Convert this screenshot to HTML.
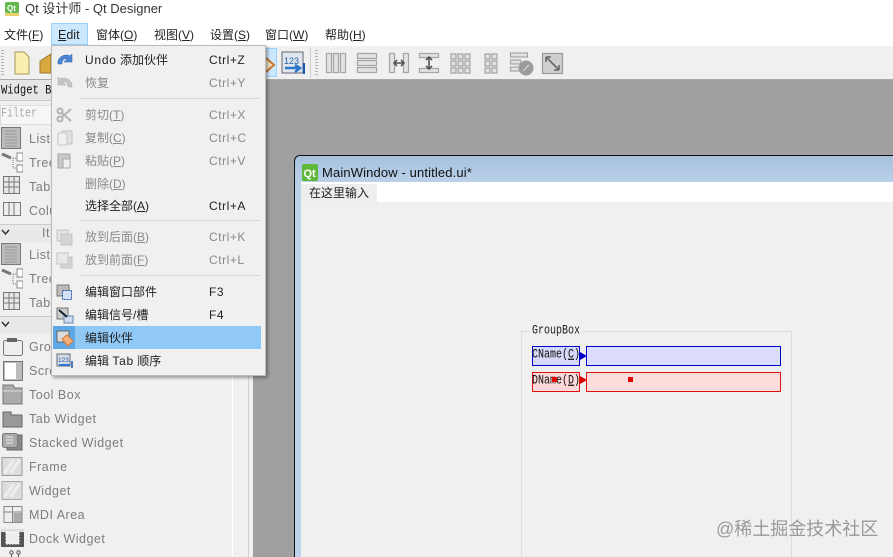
<!DOCTYPE html>
<html><head><meta charset="utf-8"><style>
html,body{margin:0;padding:0;width:893px;height:557px;overflow:hidden}
body{font-family:"Liberation Sans","Noto Sans CJK SC",sans-serif;font-size:12px;color:#111}
#r{position:absolute;left:0;top:0;width:893px;height:557px;overflow:hidden;background:#f0f0f0}
#r div,#r svg{position:absolute;white-space:nowrap}
u{text-decoration:underline}
em{font-style:normal;letter-spacing:.75px}
.m{top:27px;font-size:12px;line-height:16px;color:#222}
.it{left:85px;font-size:12px;line-height:16px;color:#222}
.sc{left:209px;font-size:12px;line-height:16px;color:#222;letter-spacing:.55px}
.d{color:#8a8a8a}
.sep{left:80px;width:180px;height:1px;background:#d6d6d6}
.w{left:29px;font-size:12.5px;line-height:16px;color:#7d7d7d;letter-spacing:.5px}
.i{left:1px;width:20px;height:20px}
.mono{font-family:"Liberation Mono","Noto Sans CJK SC",monospace}
.t{transform:scaleY(1.25);transform-origin:left center}
</style></head><body><div id="r">
<div style="left:0;top:0;width:893px;height:46px;background:#fff"></div>
<svg style="left:5px;top:2px" width="14" height="14"><rect width="14" height="11" y="0" rx="2" fill="#63b84f"/><rect y="11" width="14" height="3" fill="#e8d36a"/><text x="2" y="9" font-size="8" font-weight="bold" fill="#fff" font-family="Liberation Sans">Qt</text></svg>
<div style="left:25px;top:0;font-size:13px;line-height:17px;color:#333">Qt 设计师 - Qt Designer</div>
<div style="left:51px;top:23px;width:37px;height:22px;background:#cce8ff;border:1px solid #99d1ff;box-sizing:border-box"></div>
<div class="m" style="left:4px">文件(<u>F</u>)</div>
<div class="m" style="left:58px;font-size:12.5px"><u>E</u>dit</div>
<div class="m" style="left:96px">窗体(<u>O</u>)</div>
<div class="m" style="left:154px">视图(<u>V</u>)</div>
<div class="m" style="left:210px">设置(<u>S</u>)</div>
<div class="m" style="left:265px">窗口(<u>W</u>)</div>
<div class="m" style="left:325px">帮助(<u>H</u>)</div>

<!-- toolbar -->
<div style="left:0;top:46px;width:893px;height:34px;background:#f0f0f0;border-bottom:1px solid #a8a8a8;box-sizing:border-box"></div>
<div style="left:1px;top:50px;width:3px;height:27px;background:repeating-linear-gradient(#b5b5b5 0 1px,transparent 1px 3px)"></div>
<svg style="left:14px;top:51px" width="16" height="25"><path d="M1 1H10L15 6V23H1Z" fill="#fbefb0" stroke="#a89a60"/></svg>
<svg style="left:39px;top:53px" width="12" height="22"><path d="M1 8L12 1V20H1Z" fill="#d9a93f" stroke="#9b7a2c"/></svg>
<div style="left:265px;top:48px;width:12px;height:29px;background:#cce8ff;border:1px solid #99d1ff;box-sizing:border-box"></div>
<svg style="left:265px;top:55px" width="12" height="20"><path d="M1 3L9 10L1 17" fill="#f3e3c8" stroke="#c9772c" stroke-width="2"/></svg>
<svg style="left:281px;top:51px" width="25" height="25"><rect x="1" y="1" width="21" height="21" fill="#dfe6ee" stroke="#667"/><text x="3" y="13" font-size="9" fill="#2a5ea8" font-family="Liberation Sans">123</text><path d="M4 17H18M14 14L19 17L14 21" stroke="#2f78c8" stroke-width="2.5" fill="none"/><path d="M23 12V23" stroke="#1a55a8" stroke-width="2"/></svg>
<div style="left:310px;top:48px;width:1px;height:30px;background:#cfcfcf"></div>
<div style="left:315px;top:50px;width:3px;height:27px;background:repeating-linear-gradient(#b5b5b5 0 1px,transparent 1px 3px)"></div>
<svg style="left:325px;top:50px" width="245" height="26" fill="#e2e2e2" stroke="#a4a4a4" stroke-width="1.200">
<rect x="1.500" y="3.500" width="5" height="19"/><rect x="8.500" y="3.500" width="5" height="19"/><rect x="15.500" y="3.500" width="5" height="19"/>
<rect x="32.500" y="3.500" width="19" height="5"/><rect x="32.500" y="10.500" width="19" height="5"/><rect x="32.500" y="17.500" width="19" height="5"/>
<rect x="64.500" y="3.500" width="5" height="19"/><rect x="78.500" y="3.500" width="5" height="19"/><path d="M70 13H78M72 10L69 13L72 16M76 10L79 13L76 16" stroke="#555" stroke-width="1.600" fill="none"/>
<rect x="94.500" y="3.500" width="19" height="4"/><rect x="94.500" y="18.500" width="19" height="4"/><path d="M104 8V18M101 10L104 7L107 10M101 16L104 19L107 16" stroke="#555" stroke-width="1.600" fill="none"/>
<path d="M126 4h5v5h-5zM133 4h5v5h-5zM140 4h5v5h-5zM126 11h5v5h-5zM133 11h5v5h-5zM140 11h5v5h-5zM126 18h5v5h-5zM133 18h5v5h-5zM140 18h5v5h-5z"/>
<path d="M160 4h5v5h-5zM167 4h5v5h-5zM160 11h5v5h-5zM167 11h5v5h-5zM160 18h5v5h-5zM167 18h5v5h-5z"/>
<rect x="185.500" y="3" width="17" height="4"/><rect x="185.500" y="10" width="10" height="4"/><rect x="185.500" y="17" width="10" height="4"/><circle cx="201" cy="18" r="7" fill="#9a9a9a"/><path d="M198 21L204 15" stroke="#ddd"/>
<rect x="217.500" y="3.500" width="20" height="20" fill="#cfcfcf" stroke="#999"/><path d="M221 7L234 20M221 7h5M221 7v5M234 20h-5M234 20v-5" stroke="#666" stroke-width="1.600"/>
</svg>

<!-- mdi -->
<div style="left:253px;top:80px;width:640px;height:477px;background:#a0a0a0"></div>
<div style="left:232px;top:80px;width:1px;height:477px;background:#fff"></div>
<div style="left:248px;top:80px;width:1px;height:477px;background:#d0d0d0"></div>

<!-- widget box -->
<div style="left:0;top:80px;width:232px;height:21px;background:#e6e6e6;border-bottom:1px solid #c8c8c8;box-sizing:border-box"></div>
<div class="mono t" style="left:1px;top:84px;font-size:10.500px;line-height:14px;color:#111">Widget B</div>
<div style="left:0;top:105px;width:232px;height:20px;background:#f6f6f6;border:1px solid #ddd;box-sizing:border-box"></div>
<div class="mono t" style="left:1px;top:108px;font-size:10px;line-height:13px;color:#aaa">Filter</div>

<svg class="i" style="top:127px;height:22px" viewBox="0 0 20 22"><rect x=".5" y=".5" width="19" height="21" fill="#bbb" stroke="#777"/><path d="M4 4H16M4 7H16M4 10H16M4 13H16M4 16H16M4 19H16" stroke="#999"/></svg>
<div class="w" style="top:131px">List</div>
<svg class="i" style="top:152px;height:21px;width:22px" viewBox="0 0 22 21"><path d="M1 2L10 6" stroke="#777" stroke-width="3"/><rect x="16" y="1" width="6" height="8" fill="#fff" stroke="#888"/><rect x="16" y="13" width="6" height="7" fill="#fff" stroke="#888"/><path d="M12 6V16M12 6H15M12 16H15" stroke="#777" stroke-dasharray="1 1" fill="none"/></svg>
<div class="w" style="top:155px">Tree</div>
<svg class="i" style="top:175px" viewBox="0 0 20 20" fill="none" stroke="#777"><rect x="2.500" y="1.500" width="16" height="17" fill="#e8e8e8"/><path d="M2 7H18M2 12H18M8 2V18M13 2V18"/></svg>
<div class="w" style="top:179px">Tab</div>
<svg class="i" style="top:200px" viewBox="0 0 20 20" fill="none" stroke="#777"><rect x="2.500" y="2.500" width="17" height="13" fill="#eee"/><path d="M8 3V15M13 3V15"/></svg>
<div class="w" style="top:203px">Colu</div>
<div style="left:0;top:224px;width:232px;height:18px;background:#e9e9e9;border-top:1px solid #ccc;box-sizing:border-box"></div>
<svg style="left:1px;top:228px" width="10" height="8"><path d="M1 2L4.500 6L8 2" fill="none" stroke="#333" stroke-width="1.500"/></svg>
<div class="w" style="left:42px;top:225px">It</div>
<svg class="i" style="top:243px;height:22px" viewBox="0 0 20 22"><rect x=".5" y=".5" width="19" height="21" fill="#bcbcbc" stroke="#777"/><path d="M4 4H16M4 7H16M4 10H16M4 13H16M4 16H16M4 19H16" stroke="#999"/></svg>
<div class="w" style="top:247px">List</div>
<svg class="i" style="top:268px;height:21px;width:22px" viewBox="0 0 22 21"><path d="M1 2L10 6" stroke="#777" stroke-width="3"/><rect x="16" y="1" width="6" height="8" fill="#fff" stroke="#888"/><rect x="16" y="13" width="6" height="7" fill="#fff" stroke="#888"/><path d="M12 6V16M12 6H15M12 16H15" stroke="#777" stroke-dasharray="1 1" fill="none"/></svg>
<div class="w" style="top:271px">Tree</div>
<svg class="i" style="top:291px" viewBox="0 0 20 20" fill="none" stroke="#777"><rect x="2.500" y="1.500" width="16" height="17" fill="#e8e8e8"/><path d="M2 7H18M2 12H18M8 2V18M13 2V18"/></svg>
<div class="w" style="top:295px">Tab</div>
<div style="left:0;top:316px;width:232px;height:18px;background:#e9e9e9;border-top:1px solid #ccc;box-sizing:border-box"></div>
<svg style="left:1px;top:320px" width="10" height="8"><path d="M1 2L4.500 6L8 2" fill="none" stroke="#333" stroke-width="1.500"/></svg>
<svg class="i" style="top:336px;height:21px;width:22px" viewBox="0 0 22 21"><rect x="2.500" y="4.500" width="19" height="15" rx="2" fill="#eee" stroke="#777"/><rect x="6" y="2" width="10" height="4" fill="#666"/></svg>
<div class="w" style="top:339px">Gro</div>
<svg class="i" style="top:360px;height:21px;width:22px" viewBox="0 0 22 21"><rect x="2.500" y="1.500" width="19" height="19" fill="#bbb" stroke="#777"/><rect x="4" y="3" width="11" height="16" fill="#fff"/></svg>
<div class="w" style="top:363px">Scro</div>
<svg class="i" style="top:383px;height:22px;width:22px" viewBox="0 0 22 22"><path d="M2 2H12L14 5H21V21H2Z" fill="#aaa" stroke="#777"/><path d="M2 8H21" stroke="#ddd"/></svg>
<div class="w" style="top:387px">Tool Box</div>
<svg class="i" style="top:411px;height:17px;width:22px" viewBox="0 0 22 17"><path d="M2 1H10V4H21V16H2Z" fill="#999" stroke="#666"/></svg>
<div class="w" style="top:411px">Tab Widget</div>
<svg class="i" style="top:432px;height:20px;width:22px" viewBox="0 0 22 20"><rect x="6" y="3" width="15" height="15" fill="#888" stroke="#666"/><rect x="1.500" y="1.500" width="15" height="14" rx="2" fill="#aaa" stroke="#777"/><path d="M5 5H12M5 8H12M5 11H12" stroke="#eee"/></svg>
<div class="w" style="top:435px">Stacked Widget</div>
<svg class="i" style="top:457px;width:22px" viewBox="0 0 21 20"><rect x=".5" y=".5" width="20" height="18" fill="#ddd" stroke="#999"/><path d="M3 16L12 3M9 16L18 3" stroke="#eee" stroke-width="3"/></svg>
<div class="w" style="top:459px">Frame</div>
<svg class="i" style="top:481px;width:22px" viewBox="0 0 21 20"><rect x=".5" y=".5" width="20" height="18" fill="#ddd" stroke="#aaa"/><path d="M3 16L12 3M9 16L18 3" stroke="#eee" stroke-width="3"/></svg>
<div class="w" style="top:483px">Widget</div>
<svg class="i" style="top:505px;width:22px" viewBox="0 0 21 20"><rect x="2.500" y="1.500" width="18" height="16" fill="#eee" stroke="#888"/><rect x="12" y="8" width="8" height="9" fill="#aaa"/><path d="M3 7H20M11 2V17" stroke="#888"/></svg>
<div class="w" style="top:507px">MDI Area</div>
<svg class="i" style="top:529px;height:18px;width:23px" viewBox="0 0 23 18"><rect width="23" height="18" fill="#555"/><rect width="23" height="3" fill="#ddd"/><rect x="5" y="3" width="13" height="12" fill="#eee" stroke="#fff" stroke-dasharray="2 1"/></svg>
<div class="w" style="top:531px">Dock Widget</div>
<svg style="left:9px;top:550px" width="14" height="7" fill="none" stroke="#555"><circle cx="2.500" cy="2.500" r="1.700"/><circle cx="9.500" cy="2.500" r="1.700"/><path d="M2.500 4V7M9.500 4V7"/></svg>

<!-- MainWindow -->
<div style="left:294px;top:155px;width:610px;height:402px;background:linear-gradient(#a7c1dd,#bcd2ea 30px);border:1px solid #111;border-bottom:0;border-radius:6px 0 0 0;box-sizing:border-box"></div>
<svg style="left:302px;top:164px" width="16" height="17"><rect width="16" height="17" rx="2" fill="#5fb83a"/><text x="1.500" y="13" font-size="11" font-weight="bold" fill="#fff" font-family="Liberation Sans">Qt</text></svg>
<div style="left:322px;top:165px;font-size:13px;line-height:16px;color:#111;letter-spacing:.13px">MainWindow - untitled.ui*</div>
<div style="left:301px;top:182px;width:592px;height:375px;background:#f0f0f0"></div>
<div style="left:301px;top:182px;width:592px;height:20px;background:#fff"></div>
<div style="left:301px;top:184px;width:76px;height:18px;background:#eee"></div>
<div style="left:309px;top:186px;font-size:12px;line-height:15px;color:#222">在这里输入</div>

<!-- group box -->
<div style="left:521px;top:331px;width:271px;height:226px;border:1px solid #dcdcdc;border-bottom:0;box-sizing:border-box"></div>
<div class="mono t" style="left:530px;top:325px;padding:0 2px;background:#f0f0f0;font-size:10px;line-height:13px;color:#222">GroupBox</div>
<div style="left:532px;top:346px;width:48px;height:20px;background:#d8d8f8;border:1px solid #00c;box-sizing:border-box"></div>
<div class="mono t" style="left:532px;top:349px;font-size:10px;line-height:13px;color:#111">CName(<u>C</u>)</div>
<div style="left:586px;top:346px;width:195px;height:20px;background:#dcdcfc;border:1px solid #00c;box-sizing:border-box"></div>
<svg style="left:580px;top:352px" width="7" height="8"><path d="M0 0L7 4L0 8Z" fill="#00c"/></svg>
<div style="left:532px;top:372px;width:48px;height:20px;background:#fcd8d8;border:1px solid #e01010;box-sizing:border-box"></div>
<div class="mono t" style="left:532px;top:375px;font-size:10px;line-height:13px;color:#111">DName(<u>D</u>)</div>
<div style="left:586px;top:372px;width:195px;height:20px;background:#fddcdc;border:1px solid #e01010;box-sizing:border-box"></div>
<svg style="left:580px;top:376px" width="7" height="8"><path d="M0 0L7 4L0 8Z" fill="#d00"/></svg>
<div style="left:552px;top:377px;width:5px;height:5px;background:#e80000"></div>
<div style="left:628px;top:377px;width:5px;height:5px;background:#e80000"></div>

<div style="left:716px;top:519px;font-size:18px;line-height:21px;color:#999">@稀土掘金技术社区</div>

<!-- Edit menu -->
<div style="left:51px;top:45px;width:215px;height:331px;background:#f0f0f0;border:1px solid #bcbcbc;box-sizing:border-box;box-shadow:2px 2px 3px rgba(0,0,0,.35)"></div>
<svg style="left:56px;top:52px" width="18" height="14"><path d="M2 12C1 5 9 1 14 4L16 2V10H8L11 7C8 6 6 8 6 12Z" fill="#4d86d6" stroke="#2c5fa8" stroke-width=".5"/></svg>
<div class="it" style="top:52px"><em>Undo</em> 添加伙伴</div><div class="sc" style="top:52px">Ctrl+Z</div>
<svg style="left:56px;top:75px" width="18" height="14"><path d="M16 12C17 5 9 1 4 4L2 2V10H10L7 7C10 6 12 8 12 12Z" fill="#c4c4c4" stroke="#aaa" stroke-width=".5"/></svg>
<div class="it d" style="top:75px">恢复</div><div class="sc d" style="top:75px">Ctrl+Y</div>
<div class="sep" style="top:98px"></div>
<svg style="left:56px;top:107px" width="17" height="16" fill="none" stroke="#b4b4b4" stroke-width="2"><path d="M6 10L15 2M6 6L15 14"/><circle cx="4" cy="4" r="2.500"/><circle cx="4" cy="12" r="2.500"/></svg>
<div class="it d" style="top:107px">剪切(<u>T</u>)</div><div class="sc d" style="top:107px">Ctrl+X</div>
<svg style="left:57px;top:130px" width="16" height="16"><rect x="5" y="1" width="10" height="13" fill="#e2e2e2" stroke="#c0c0c0"/><rect x="1" y="3" width="9" height="12" fill="#f0f0f0" stroke="#c8c8c8"/></svg>
<div class="it d" style="top:130px">复制(<u>C</u>)</div><div class="sc d" style="top:130px">Ctrl+C</div>
<svg style="left:57px;top:153px" width="15" height="16"><rect x="1" y="1" width="12" height="14" fill="#c8c8c8" stroke="#a8a8a8"/><rect x="6" y="6" width="7" height="9" fill="#eee" stroke="#aaa"/></svg>
<div class="it d" style="top:153px">粘贴(<u>P</u>)</div><div class="sc d" style="top:153px">Ctrl+V</div>
<div class="it d" style="top:176px">删除(<u>D</u>)</div>
<div class="it" style="top:198px">选择全部(<u>A</u>)</div><div class="sc" style="top:198px">Ctrl+A</div>
<div class="sep" style="top:220px"></div>
<svg style="left:56px;top:229px" width="17" height="17"><rect x="1" y="1" width="11" height="11" fill="#e4e4e4" stroke="#c4c4c4"/><rect x="5" y="5" width="11" height="11" fill="#d4d4d4" stroke="#c4c4c4"/></svg>
<div class="it d" style="top:229px">放到后面(<u>B</u>)</div><div class="sc d" style="top:229px">Ctrl+K</div>
<svg style="left:56px;top:252px" width="17" height="17"><rect x="5" y="5" width="11" height="11" fill="#d4d4d4" stroke="#c4c4c4"/><rect x="1" y="1" width="11" height="11" fill="#e8e8e8" stroke="#c4c4c4"/></svg>
<div class="it d" style="top:252px">放到前面(<u>F</u>)</div><div class="sc d" style="top:252px">Ctrl+L</div>
<div class="sep" style="top:275px"></div>
<svg style="left:56px;top:284px" width="18" height="17"><rect x="1" y="1" width="12" height="11" fill="#bbb" stroke="#777"/><rect x="6.500" y="6.500" width="9" height="9" fill="#cfe0f7" stroke="#1f4f9f" stroke-dasharray="2 1"/></svg>
<div class="it" style="top:284px">编辑窗口部件</div><div class="sc" style="top:284px">F3</div>
<svg style="left:56px;top:307px" width="18" height="17"><rect x="1" y="1" width="11" height="11" fill="#ccc" stroke="#777"/><rect x="8" y="9" width="9" height="7" fill="#cfdcf0" stroke="#6a86b8"/><path d="M3 3L11 10" stroke="#123" stroke-width="2"/></svg>
<div class="it" style="top:307px">编辑信号/槽</div><div class="sc" style="top:307px">F4</div>
<div style="left:53px;top:326px;width:208px;height:23px;background:#90c8f6"></div>
<div style="left:53px;top:326px;width:22px;height:23px;background:#5fa8e8"></div>
<svg style="left:56px;top:330px" width="18" height="17"><rect x="1" y="1" width="12" height="11" fill="#ddd" stroke="#666"/><path d="M6 9L11 5L17 11L12 16Z" fill="#f2b07a" stroke="#d9772a"/></svg>
<div class="it" style="top:330px">编辑伙伴</div>
<svg style="left:56px;top:353px" width="18" height="17"><rect x="1" y="1" width="13" height="12" fill="#d4dbe6" stroke="#667"/><text x="2" y="9" font-size="6.500" fill="#2a5ea8" font-family="Liberation Sans">123</text><path d="M3 12H14" stroke="#2f78c8" stroke-width="2"/><path d="M16 8V15" stroke="#1a55a8" stroke-width="1.500"/></svg>
<div class="it" style="top:353px">编辑 <em>Tab</em> 顺序</div>
</div></body></html>
